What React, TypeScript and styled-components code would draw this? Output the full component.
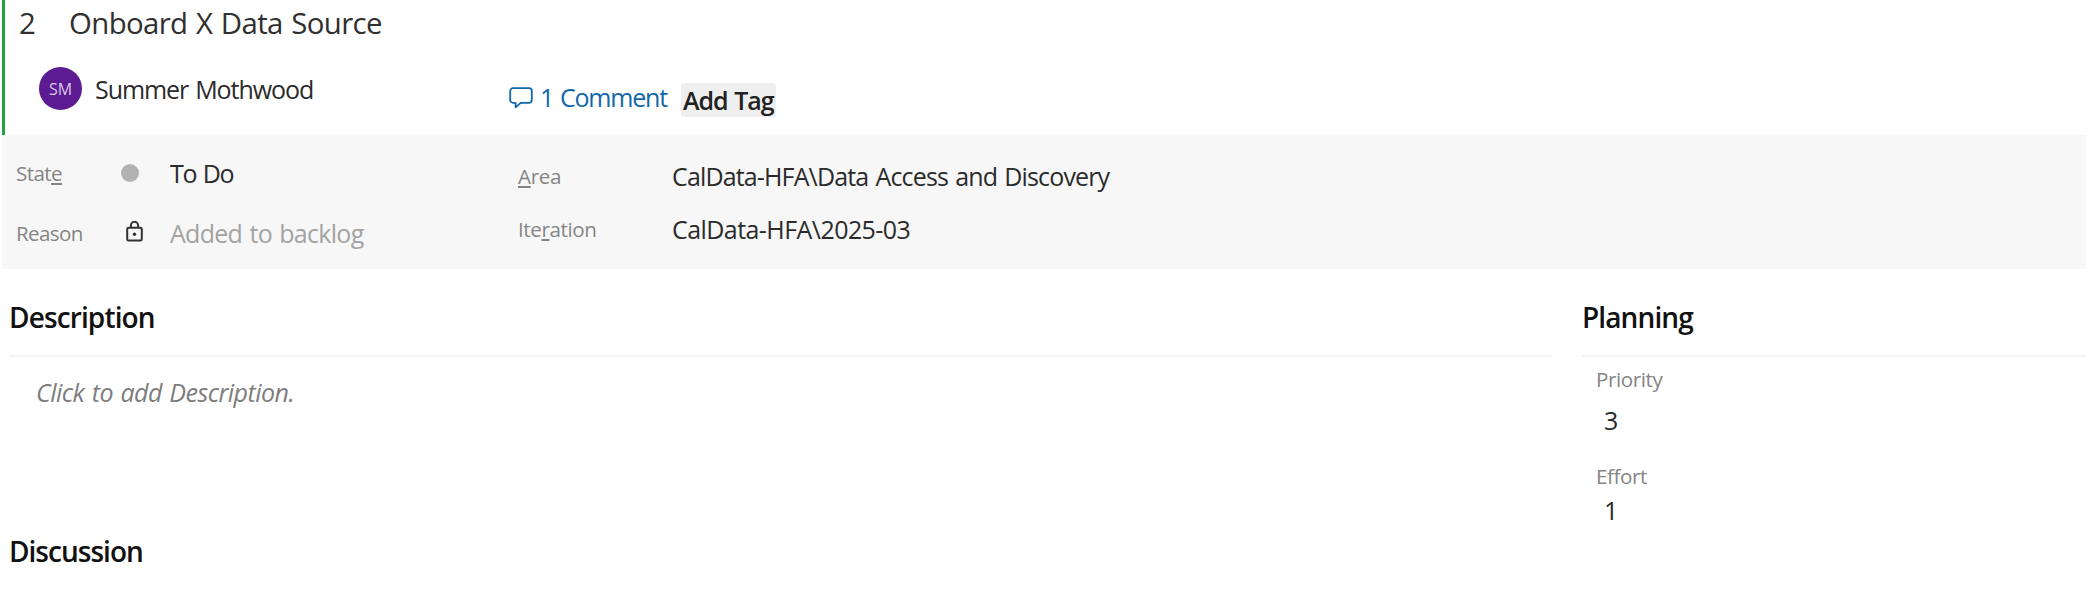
import React from 'react';
import styled, { createGlobalStyle } from 'styled-components';

const GlobalStyle = createGlobalStyle`
  *, *::before, *::after { box-sizing: border-box; }
  body {
    margin: 0;
    background: #fff;
    font-family: "Open Sans", "Noto Sans", sans-serif;
    color: #2b2b2b;
    overflow: hidden;
  }
  h2 { margin: 0; }
`;

const Page = styled.main`
  width: 2092px;
  height: 592px;
  overflow: hidden;
  padding: 0 6px 0 2px;
`;

const Text = styled.span<{ $track?: number }>`
  display: block;
  white-space: nowrap;
  font-size: 25px;
  line-height: 34px;
  letter-spacing: ${({ $track = 0 }) => $track}px;
  word-spacing: 1.5px;
`;

const Header = styled.header`
  height: 135px;
  padding: 3px 0 0 14px;
  border-left: 3px solid #23a148;
`;

const TitleRow = styled.div`
  display: grid;
  grid-template-columns: 50px 1fr;
  height: 40px;
`;

const TitleText = styled(Text)`
  font-size: 29.4px;
  line-height: 40px;
  color: #303030;
`;

const MetaRow = styled.div`
  display: grid;
  grid-template-columns: 470px 172px auto;
  justify-content: start;
  margin: 24px 0 0 20px;
`;

const Assignee = styled.div`
  display: flex;
  align-items: center;
  gap: 13px;
  height: 43px;
`;

const Avatar = styled.div`
  display: flex;
  align-items: center;
  justify-content: center;
  width: 43px;
  height: 43px;
  border-radius: 50%;
  background: #5c1a93;
  color: #d9c6e6;
  font-size: 16px;
`;

const CommentLink = styled.a`
  display: flex;
  height: 34px;
  margin-top: 13px;
  gap: 7px;
  color: #1068ab;

  svg { margin-top: 7px; flex: none; }
`;

const AddTag = styled.button`
  display: flex;
  width: 95px;
  height: 34px;
  margin-top: 16px;
  padding: 0 0 0 2px;
  border: 0;
  border-radius: 3px;
  background: #efefef;
  color: #222;
  font-family: inherit;
`;

const TagText = styled(Text)`
  font-weight: 600;
`;

const FieldPanel = styled.section`
  display: grid;
  grid-template-columns: 516px 1fr;
  height: 134px;
  background: #f7f7f7;
`;

const FieldColumn = styled.div<{ $top: number; $gap: number }>`
  display: flex;
  flex-direction: column;
  gap: ${({ $gap }) => $gap}px;
  padding-top: ${({ $top }) => $top}px;
`;

const StateField = styled.div`
  display: grid;
  grid-template-columns: 105px 49px auto;
  justify-content: start;
  align-items: center;
  height: 34px;
  padding-left: 14px;
`;

const PathField = styled.div`
  display: grid;
  grid-template-columns: 154px auto;
  justify-content: start;
  align-items: center;
  height: 34px;
`;

const Label = styled(Text)`
  font-size: 20.6px;
  line-height: 30px;
  color: #858585;

  u {
    text-decoration-thickness: 2px;
    text-underline-offset: 2px;
    text-decoration-skip-ink: none;
  }
`;

const StateDot = styled.span`
  width: 18px;
  height: 18px;
  border-radius: 50%;
  background: #b2b2b2;
`;

const LockSlot = styled.span`
  display: flex;
  padding: 0 0 3px 5px;
`;

const MutedText = styled(Text)`
  color: #a3a3a3;
`;

const Body = styled.div`
  display: grid;
  grid-template-columns: 1544px 1fr;
  column-gap: 29px;
  padding-left: 7px;
`;

const Heading = styled.h2<{ $track: number }>`
  font-size: 28px;
  line-height: 36px;
  font-weight: 600;
  letter-spacing: ${({ $track }) => $track}px;
  color: #111;
`;

const SectionHeading = styled(Heading)`
  height: 88px;
  padding-top: 30px;
  border-bottom: 2px solid #f3f3f3;
`;

const DiscussionHeading = styled(Heading)`
  margin-top: 124px;
`;

const Placeholder = styled(Text)`
  padding: 18px 0 0 27px;
  font-style: italic;
  color: #7d7d7d;
`;

const PlanningField = styled.div<{ $top: number; $gap: number }>`
  display: flex;
  flex-direction: column;
  gap: ${({ $gap }) => $gap}px;
  padding: ${({ $top }) => $top}px 0 0 14px;
`;

const PlanningValue = styled(Text)`
  line-height: 30px;
  padding-left: 8px;
`;

const CommentIcon = () => (
  <svg width="24" height="22" viewBox="0 0 24 22" fill="none" stroke="currentColor" strokeWidth="1.8" strokeLinejoin="round">
    <path d="M4 1.2h16a2.8 2.8 0 0 1 2.8 2.8v9a2.8 2.8 0 0 1-2.8 2.8h-8.3L6.6 20.4v-4.6H4A2.8 2.8 0 0 1 1.2 13V4A2.8 2.8 0 0 1 4 1.2z" />
  </svg>
);

const LockIcon = () => (
  <svg width="17" height="21" viewBox="0 0 17 21" fill="none" stroke="#333" strokeWidth="2">
    <rect x="1.2" y="6.8" width="14.6" height="12.8" rx="1.4" />
    <path d="M4.9 6.8V4.4a3.6 3.6 0 0 1 7.2 0v2.4" />
    <circle cx="8.5" cy="13.2" r="1.7" fill="#333" stroke="none" />
  </svg>
);

export default function App() {
  return (
    <>
      <GlobalStyle />
      <Page>
        <Header>
          <TitleRow>
            <TitleText>2</TitleText>
            <TitleText $track={-0.63}>Onboard X Data Source</TitleText>
          </TitleRow>
          <MetaRow>
            <Assignee>
              <Avatar>SM</Avatar>
              <Text $track={-1.06}>Summer Mothwood</Text>
            </Assignee>
            <CommentLink>
              <CommentIcon />
              <Text $track={-1.2}>1 Comment</Text>
            </CommentLink>
            <AddTag>
              <TagText $track={-1.1}>Add Tag</TagText>
            </AddTag>
          </MetaRow>
        </Header>

        <FieldPanel>
          <FieldColumn $top={21} $gap={26}>
            <StateField>
              <Label $track={-0.6}>Stat<u>e</u></Label>
              <StateDot />
              <Text $track={-1.35}>To Do</Text>
            </StateField>
            <StateField>
              <Label $track={-0.65}>Reason</Label>
              <LockSlot><LockIcon /></LockSlot>
              <MutedText $track={-0.71}>Added to backlog</MutedText>
            </StateField>
          </FieldColumn>
          <FieldColumn $top={24} $gap={19}>
            <PathField>
              <Label $track={-0.3}><u>A</u>rea</Label>
              <Text $track={-0.85}>CalData-HFA\Data Access and Discovery</Text>
            </PathField>
            <PathField>
              <Label $track={-0.4}>Ite<u>r</u>ation</Label>
              <Text $track={-0.56}>CalData-HFA\2025-03</Text>
            </PathField>
          </FieldColumn>
        </FieldPanel>

        <Body>
          <section>
            <SectionHeading $track={-0.87}>Description</SectionHeading>
            <Placeholder $track={-0.53}>Click to add Description.</Placeholder>
            <DiscussionHeading $track={-0.98}>Discussion</DiscussionHeading>
          </section>
          <section>
            <SectionHeading $track={-0.88}>Planning</SectionHeading>
            <PlanningField $top={7} $gap={11}>
              <Label $track={-0.42}>Priority</Label>
              <PlanningValue>3</PlanningValue>
            </PlanningField>
            <PlanningField $top={26} $gap={4}>
              <Label $track={-0.4}>Effort</Label>
              <PlanningValue>1</PlanningValue>
            </PlanningField>
          </section>
        </Body>
      </Page>
    </>
  );
}
